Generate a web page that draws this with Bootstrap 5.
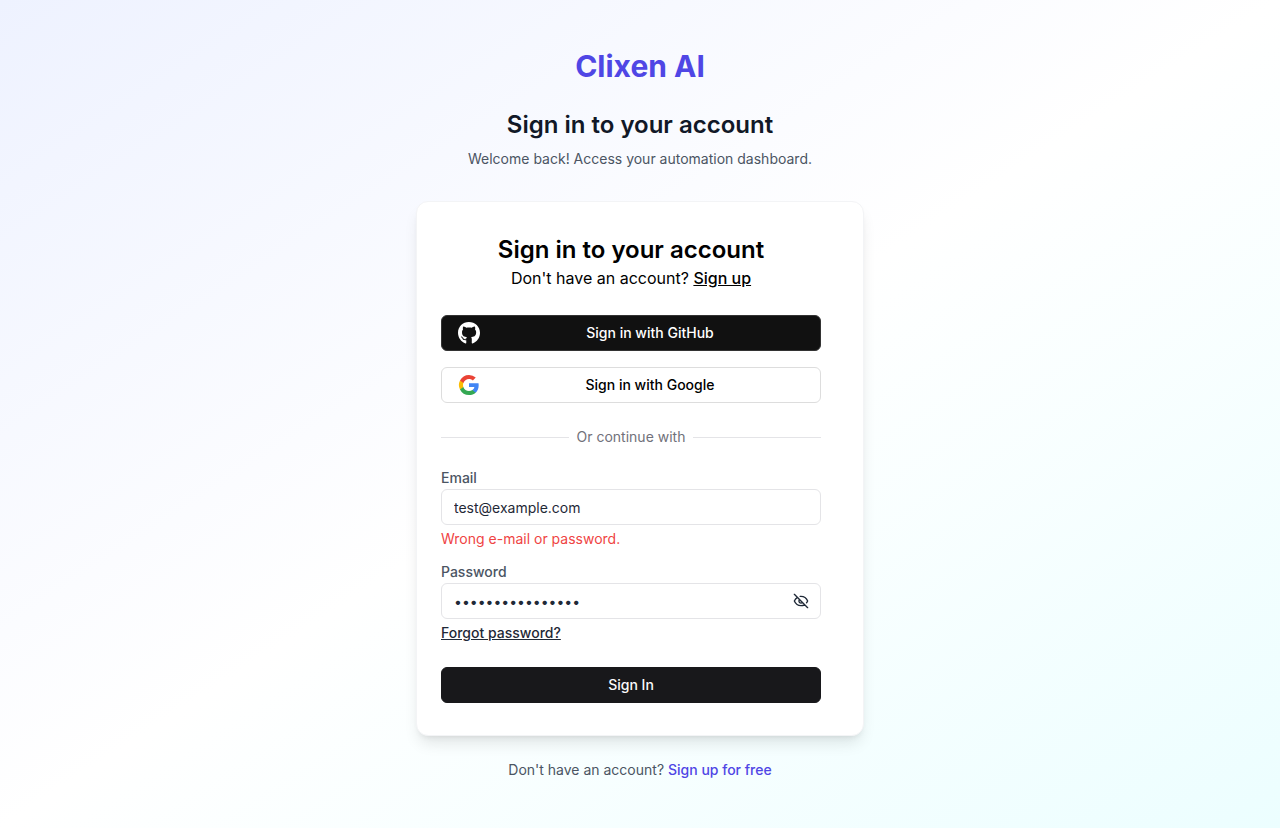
<!DOCTYPE html>
<html lang="en">
<head>
<meta charset="utf-8">
<meta name="viewport" content="width=device-width, initial-scale=1">
<title>Sign in - Clixen AI</title>
<link href="https://cdn.jsdelivr.net/npm/bootstrap@5.3.0/dist/css/bootstrap.min.css" rel="stylesheet">
<style>
body{font-family:Inter,"Liberation Sans",sans-serif;font-size:14px;line-height:20px;color:#4b5563;background:linear-gradient(to bottom right,#eef2ff,#fff,#ecfeff)}
h1,h2{margin:0;font-size:24px;line-height:32px;font-weight:600}
.brand{font-size:30px;line-height:36px;margin-bottom:25px;font-weight:700;color:#4f46e5;text-decoration:none}
.ink{color:#111827}
.auth-wrap{max-width:448px}
.auth-card{background:#fff;border:1px solid #f3f4f6;border-radius:12px;padding:32px 42px 32px 24px;margin-top:32px;box-shadow:0 10px 15px -3px rgba(0,0,0,.1),0 4px 6px -4px rgba(0,0,0,.1);color:#000}
.lede{font-size:16px;line-height:24px;margin-bottom:25px}
.lede a{color:#000;font-weight:500}
.auth-btn{height:36px;border-radius:6px;font-size:14px;line-height:20px;font-weight:500;padding:0 16px;border:1px solid #ddd;background:#fff;color:#000}
.auth-btn.dark,.auth-btn.dark:hover{background:#111;border-color:#333;color:#fff}
.auth-btn.main,.auth-btn.main:hover{background:#18181b;border-color:#18181b;color:#fafafa}
.divider{margin:24px 0 20px}
.rule{height:1px;background:#e4e4e7}
.or-text{color:#71717a}
.form-label{margin:0;line-height:22px;color:#4b5563;font-weight:500}
.form-control{height:36px;border:1px solid #e4e4e7;border-radius:6px;padding:4px 12px;font-size:14px;line-height:20px;color:#1f2937}
.err{margin:4px 0 12px;color:#ef4444}
.eye{top:0;right:0;width:40px;height:36px;border:0;background:none;padding:0;color:#1f2937}
.forgot{color:#1f2937;font-weight:500}
.free{color:#4f46e5;font-weight:500;text-decoration:none}
</style>
</head>
<body class="min-vh-100 d-flex align-items-center justify-content-center">
<main class="auth-wrap w-100 py-5">
  <header class="text-center">
    <a href="#" class="brand d-block">Clixen AI</a>
    <h1 class="ink mb-2">Sign in to your account</h1>
    <p class="mb-0">Welcome back! Access your automation dashboard.</p>
  </header>
  <section class="auth-card mb-4">
    <div class="text-center">
      <h2>Sign in to your account</h2>
      <p class="lede">Don't have an account? <a href="#">Sign up</a></p>
    </div>
    <button type="button" class="btn auth-btn dark w-100 d-flex align-items-center gap-3 mb-3">
      <svg width="22" height="22" viewBox="0 0 496 496" fill="currentColor" aria-hidden="true"><path d="M165.9 389.4c0 2-2.3 3.6-5.2 3.6-3.3.3-5.6-1.3-5.6-3.6 0-2 2.3-3.6 5.2-3.6 3-.3 5.6 1.3 5.6 3.6zm-31.1-4.5c-.7 2 1.3 4.3 4.3 4.9 2.6 1 5.6 0 6.2-2s-1.3-4.3-4.3-5.2c-2.6-.7-5.5.3-6.2 2.3zm44.2-1.7c-2.9.7-4.9 2.6-4.6 4.9.3 2 2.9 3.3 5.9 2.6 2.9-.7 4.9-2.6 4.6-4.6-.3-1.9-3-3.2-5.9-2.9zM244.8 0C106.1 0 0 105.3 0 244c0 110.9 69.8 205.8 169.5 239.2 12.8 2.3 17.3-5.6 17.3-12.1 0-6.2-.3-40.4-.3-61.4 0 0-70 15-84.7-29.8 0 0-11.4-29.1-27.8-36.6 0 0-22.9-15.7 1.6-15.4 0 0 24.9 2 38.6 25.8 21.9 38.6 58.6 27.5 72.9 20.9 2.3-16 8.8-27.1 16-33.7-55.9-6.2-112.3-14.3-112.3-110.5 0-27.5 7.6-41.3 23.6-58.9-2.6-6.5-11.1-33.3 2.6-67.9 20.9-6.5 69 27 69 27 20-5.6 41.5-8.5 62.8-8.5s42.8 2.9 62.8 8.5c0 0 48.1-33.6 69-27 13.7 34.7 5.2 61.4 2.6 67.9 16 17.7 25.8 31.5 25.8 58.9 0 96.5-58.9 104.2-114.8 110.5 9.2 7.9 17 22.9 17 46.4 0 33.7-.3 75.4-.3 83.6 0 6.5 4.6 14.4 17.3 12.1C428.2 449.8 496 354.9 496 244 496 105.3 383.5 0 244.8 0zM97.2 344.9c-1.3 1-1 3.3.7 5.2 1.6 1.6 3.9 2.3 5.2 1 1.3-1 1-3.3-.7-5.2-1.6-1.6-3.9-2.3-5.2-1zm-10.8-8.1c-.7 1.3.3 2.9 2.3 3.9 1.6 1 3.6.7 4.3-.7.7-1.3-.3-2.9-2.3-3.9-2-.6-3.6-.3-4.3.7zm32.4 35.6c-1.6 1.3-1 4.3 1.3 6.2 2.3 2.3 5.2 2.6 6.5 1 1.3-1.3.7-4.3-1.3-6.2-2.2-2.3-5.2-2.6-6.5-1zm-11.4-14.7c-1.6 1-1.6 3.6 0 5.9 1.6 2.3 4.3 3.3 5.6 2.3 1.6-1.3 1.6-3.9 0-6.2-1.4-2.3-4-3.3-5.6-2z"/></svg>
      <span class="flex-grow-1">Sign in with GitHub</span>
    </button>
    <button type="button" class="btn auth-btn w-100 d-flex align-items-center gap-3">
      <svg width="22" height="22" viewBox="0 0 24 24" aria-hidden="true"><path fill="#4285f4" d="M22.56 12.25c0-.78-.07-1.53-.2-2.25H12v4.26h5.92a5.06 5.06 0 0 1-2.2 3.32v2.77h3.57c2.08-1.92 3.27-4.74 3.27-8.1z"/><path fill="#34a853" d="M12 23c2.97 0 5.46-.98 7.28-2.66l-3.57-2.77c-.98.66-2.23 1.06-3.71 1.06-2.86 0-5.29-1.93-6.16-4.53H2.18v2.84A11 11 0 0 0 12 23z"/><path fill="#fbbc05" d="M5.84 14.09a6.6 6.6 0 0 1 0-4.18V7.07H2.18a11 11 0 0 0 0 9.86l3.66-2.84z"/><path fill="#ea4335" d="M12 5.38c1.62 0 3.06.56 4.21 1.64l3.15-3.15A10.9 10.9 0 0 0 12 1 11 11 0 0 0 2.18 7.07l3.66 2.84C6.71 7.31 9.14 5.38 12 5.38z"/></svg>
      <span class="flex-grow-1">Sign in with Google</span>
    </button>
    <div class="divider d-flex align-items-center gap-2">
      <span class="rule flex-grow-1"></span><span class="or-text">Or continue with</span><span class="rule flex-grow-1"></span>
    </div>
    <form>
      <label class="form-label d-block" for="email">Email</label>
      <input class="form-control" id="email" type="email" value="test@example.com">
      <p class="err">Wrong e-mail or password.</p>
      <label class="form-label d-block" for="password">Password</label>
      <div class="position-relative">
        <input class="form-control pe-5" id="password" type="password" value="wrongpassword123">
        <button type="button" class="eye position-absolute d-flex align-items-center justify-content-center" aria-label="Show password">
          <svg width="16" height="16" viewBox="0 0 24 24" fill="none" stroke="currentColor" stroke-width="2" stroke-linecap="round" stroke-linejoin="round"><path d="M9.88 9.88a3 3 0 1 0 4.24 4.24M10.73 5.08A10.43 10.43 0 0 1 12 5c7 0 10 7 10 7a13.16 13.16 0 0 1-1.67 2.68M6.61 6.61A13.526 13.526 0 0 0 2 12s3 7 10 7a9.74 9.74 0 0 0 5.39-1.61M2 2l20 20"/></svg>
        </button>
      </div>
      <a href="#" class="forgot d-inline-block mt-1 mb-4">Forgot password?</a>
      <button type="button" class="btn auth-btn main w-100 d-block">Sign In</button>
    </form>
  </section>
  <footer class="text-center">Don't have an account? <a class="free" href="#">Sign up for free</a></footer>
</main>
<script src="https://cdn.jsdelivr.net/npm/bootstrap@5.3.0/dist/js/bootstrap.bundle.min.js"></script>
</body>
</html>
